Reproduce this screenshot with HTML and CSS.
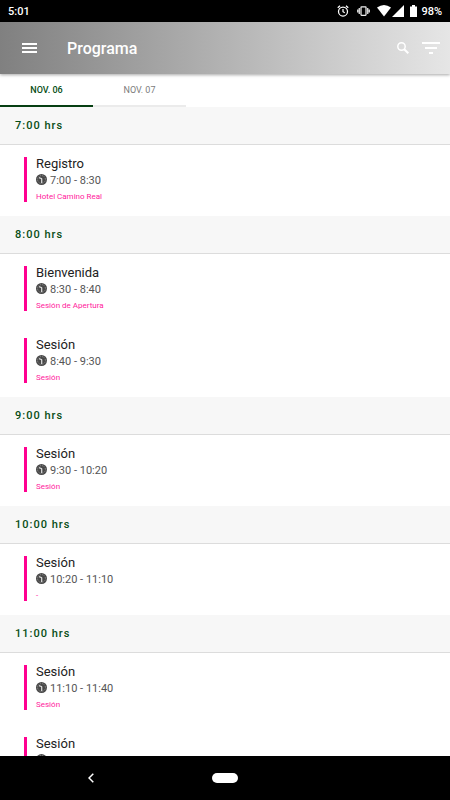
FILE: index.html
```html
<!DOCTYPE html>
<html lang="es">
<head>
<meta charset="utf-8">
<meta name="viewport" content="width=device-width, initial-scale=1">
<title>Programa</title>
<link rel="stylesheet" href="styles.css">
</head>
<body>
<svg class="defs" aria-hidden="true">
  <symbol id="clock" viewBox="0 0 22 22">
    <circle cx="11" cy="11" r="11" fill="#484848"/>
    <circle cx="11" cy="11" r="7.8" fill="none" stroke="#aaa" stroke-width="2" stroke-dasharray="1.5 2.58"/>
    <path d="M11.500 18V9L6 7.500" fill="none" stroke="#fff" stroke-width="2"/>
  </symbol>
</svg>
<div class="status">
  <span>5:01</span>
  <div class="status-icons">
    <svg class="alarm" viewBox="0 0 24 24" fill="none" stroke="#fff" stroke-width="2.500"><circle cx="12" cy="13" r="9"/><path d="M12 8v5.500l3.500 2M1.500 5.500l4.500-4M22.500 5.500l-4.500-4"/></svg>
    <svg class="vibrate" viewBox="0 0 26 20" fill="none" stroke="#eee" stroke-width="2.500"><rect x="8" y="1.500" width="10" height="17" rx="1"/><path d="M4.500 4v12M1.500 7v6M21.500 4v12M24.500 7v6"/></svg>
    <svg class="wifi" viewBox="0 0 28 24" fill="#fff"><path d="M0 5Q14-5 28 5L14 23Z"/></svg>
    <svg class="signal" viewBox="0 0 24 24"><path d="M0 24L24 0V24Z" fill="#fff"/></svg>
    <svg class="battery" viewBox="0 0 14 24" fill="#fff"><path d="M4 0h6v3h4v21H0V3h4z"/></svg>
    <span>98%</span>
  </div>
</div>
<header class="appbar">
  <button class="icon-button" aria-label="Menú"><svg width="15" height="10" viewBox="0 0 15 10" fill="#fff"><path d="M0 0h15v2H0zM0 4h15v2H0zM0 8h15v2H0z"/></svg></button>
  <h1>Programa</h1>
  <button class="icon-button" aria-label="Buscar"><svg width="12" height="12" viewBox="0 0 12 12" fill="none" stroke="#fff"><circle cx="4.500" cy="4.500" r="3.700" stroke-width="1.500"/><path d="M7.200 7.200L11.300 11.300" stroke-width="2"/></svg></button>
  <button class="icon-button" aria-label="Filtrar"><svg width="18" height="12" viewBox="0 0 18 12" fill="#fff"><path d="M0 0h18v2H0zM3 5h12v2H3zM7 10h4v2H7z"/></svg></button>
</header>
<nav class="tabs">
  <button class="tab active">NOV. 06</button>
  <button class="tab">NOV. 07</button>
</nav>
<main class="schedule">
  <section>
    <h2>7:00 hrs</h2>
    <article class="event"><div class="event-body"><h3>Registro</h3><p class="time"><svg><use href="#clock"/></svg>7:00 - 8:30</p><p class="place">Hotel Camino Real</p></div></article>
  </section>
  <section>
    <h2>8:00 hrs</h2>
    <article class="event"><div class="event-body"><h3>Bienvenida</h3><p class="time"><svg><use href="#clock"/></svg>8:30 - 8:40</p><p class="place">Sesión de Apertura</p></div></article>
    <article class="event"><div class="event-body"><h3>Sesión</h3><p class="time"><svg><use href="#clock"/></svg>8:40 - 9:30</p><p class="place">Sesión</p></div></article>
  </section>
  <section>
    <h2>9:00 hrs</h2>
    <article class="event"><div class="event-body"><h3>Sesión</h3><p class="time"><svg><use href="#clock"/></svg>9:30 - 10:20</p><p class="place">Sesión</p></div></article>
  </section>
  <section>
    <h2>10:00 hrs</h2>
    <article class="event"><div class="event-body"><h3>Sesión</h3><p class="time"><svg><use href="#clock"/></svg>10:20 - 11:10</p><p class="place">-</p></div></article>
  </section>
  <section>
    <h2>11:00 hrs</h2>
    <article class="event"><div class="event-body"><h3>Sesión</h3><p class="time"><svg><use href="#clock"/></svg>11:10 - 11:40</p><p class="place">Sesión</p></div></article>
    <article class="event"><div class="event-body"><h3>Sesión</h3><p class="time"><svg><use href="#clock"/></svg></p></div></article>
  </section>
</main>
<footer class="navbar">
  <button aria-label="Atrás"><svg width="6" height="10" viewBox="0 0 6 10" fill="none" stroke="#fff" stroke-width="1.500"><path d="M5.300 .7L1 5l4.300 4.300"/></svg></button>
  <button class="home" aria-label="Inicio"></button>
</footer>
</body>
</html>
```
FILE: styles.css
```css
* { box-sizing: border-box; margin: 0; }

body {
  display: flex;
  flex-direction: column;
  height: 100vh;
  background: #fff;
  color: #222;
  font-family: Roboto, "Liberation Sans", sans-serif;
}

button {
  padding: 0;
  border: 0;
  background: none;
  font: inherit;
}

svg { display: block; }

.defs { position: absolute; width: 0; height: 0; }

.status {
  flex: none;
  display: flex;
  justify-content: space-between;
  align-items: center;
  height: 22px;
  padding: 0 8px;
  background: #000;
  color: #fff;
  font-size: 11px;
  font-weight: 500;
}

.status-icons { display: flex; align-items: center; }
.alarm { width: 12px; height: 12px; margin-right: 8px; }
.vibrate { width: 13px; height: 10px; margin-right: 7px; }
.wifi { width: 14px; height: 12px; margin-right: 1px; }
.signal { width: 12px; height: 12px; margin-right: 6px; }
.battery { width: 7px; height: 12px; margin-right: 4px; }

.appbar {
  flex: none;
  position: relative;
  display: flex;
  align-items: center;
  height: 52px;
  padding: 0 5px 0 15px;
  background: linear-gradient(90deg, #808080, #e6e6e6);
  box-shadow: 0 1px 3px rgba(0, 0, 0, .35);
}

.appbar h1 {
  flex: 1;
  margin-left: 24px;
  color: #fff;
  font-size: 16px;
  font-weight: 500;
}

.icon-button {
  display: flex;
  justify-content: center;
  align-items: center;
  width: 28px;
  height: 28px;
}

.tabs {
  flex: none;
  display: flex;
  height: 33px;
}

.tab {
  width: 93px;
  padding-top: 1px;
  border-bottom: 2px solid #ebebeb;
  color: #7c7c7c;
  font-size: 9px;
}

.tab.active {
  border-color: #063f12;
  color: #064d15;
  font-weight: 500;
}

.schedule {
  flex: 1;
  min-height: 0;
  overflow-y: auto;
  scrollbar-width: none;
}

h2 {
  height: 38px;
  padding-left: 15px;
  border-bottom: 1px solid #dcdcdc;
  background: #f7f7f7;
  color: #064d15;
  font-size: 11px;
  font-weight: 500;
  line-height: 37px;
  letter-spacing: 1px;
}

.event { padding: 12px 24px 14px; }
.event + .event { margin-top: 1px; }

.event-body {
  height: 45px;
  padding-left: 9px;
  border-left: 3px solid #ff0090;
}

h3 {
  font-size: 13px;
  font-weight: 400;
  line-height: 14px;
}

.time {
  display: flex;
  align-items: center;
  gap: 3px;
  height: 19px;
  color: #555;
  font-size: 11px;
}

.time svg { width: 11px; height: 11px; margin-bottom: 2px; }

.place {
  color: #ff1a9c;
  font-size: 8px;
  line-height: 14px;
}

.navbar {
  flex: none;
  display: grid;
  grid-template-columns: 1fr 26px 1fr;
  align-items: center;
  height: 44px;
  background: #000;
}

.navbar button {
  justify-self: center;
  margin-right: 30px;
}

.navbar .home {
  width: 26px;
  height: 10px;
  margin: 0;
  border-radius: 5px;
  background: #fff;
}
```
